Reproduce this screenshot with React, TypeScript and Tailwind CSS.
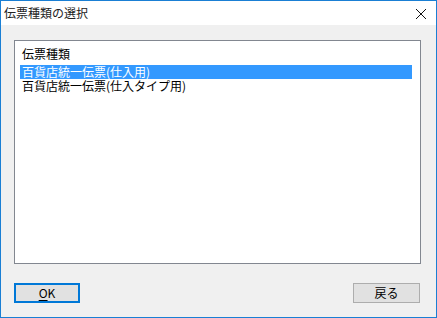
import React from "react";

const rows = ["百貨店統一伝票(仕入用)", "百貨店統一伝票(仕入タイプ用)"];

const font = {
  fontFamily: '"Noto Sans CJK JP", "Liberation Sans", sans-serif',
};

export default function App() {
  return (
    <div
      className="w-[437px] h-[318px] border border-[#1a7fd4] bg-[#f0f0f0] flex flex-col text-[12px] text-black"
      style={font}
    >
      {/* タイトルバー */}
      <div className="h-[24px] bg-white flex items-center justify-between pl-[3px] pr-[9px]">
        <span className="text-[12px] leading-none text-[#222]">伝票種類の選択</span>
        <svg width="12" height="12" viewBox="0 0 12 12" className="mt-[1px]">
          <path d="M1 1 L11 11 M11 1 L1 11" stroke="#111" strokeWidth="1" />
        </svg>
      </div>

      {/* 本体 */}
      <div className="flex-1 flex flex-col pl-[13px] pt-[15px]">
        <div className="w-[407px] h-[224px] border border-[#828790] bg-white pl-[5px] pt-[6px]">
          <div className="h-[14px] flex items-center pl-[2px]">
            <span className="leading-[12px]">伝票種類</span>
          </div>
          <div className="mt-[4px] flex flex-col">
            {rows.map((row, i) => (
              <div
                key={row}
                className={
                  i === 0
                    ? "w-[392px] h-[14px] flex items-center pl-[2px] bg-[#3399ff] text-white"
                    : "w-[392px] h-[14px] flex items-center pl-[2px]"
                }
              >
                <span className="leading-[12px]">{row}</span>
              </div>
            ))}
          </div>
        </div>

        <div className="mt-[19px] flex justify-between w-[406px]">
          <button className="w-[66px] h-[20px] border-2 border-[#0078d7] bg-[#e1e1e1] text-[12px] leading-none flex items-center justify-center">
            <span className="underline underline-offset-2">O</span>K
          </button>
          <button className="w-[67px] h-[20px] border border-[#adadad] bg-[#e1e1e1] text-[12px] leading-none flex items-center justify-center">
            戻る
          </button>
        </div>
      </div>
    </div>
  );
}
